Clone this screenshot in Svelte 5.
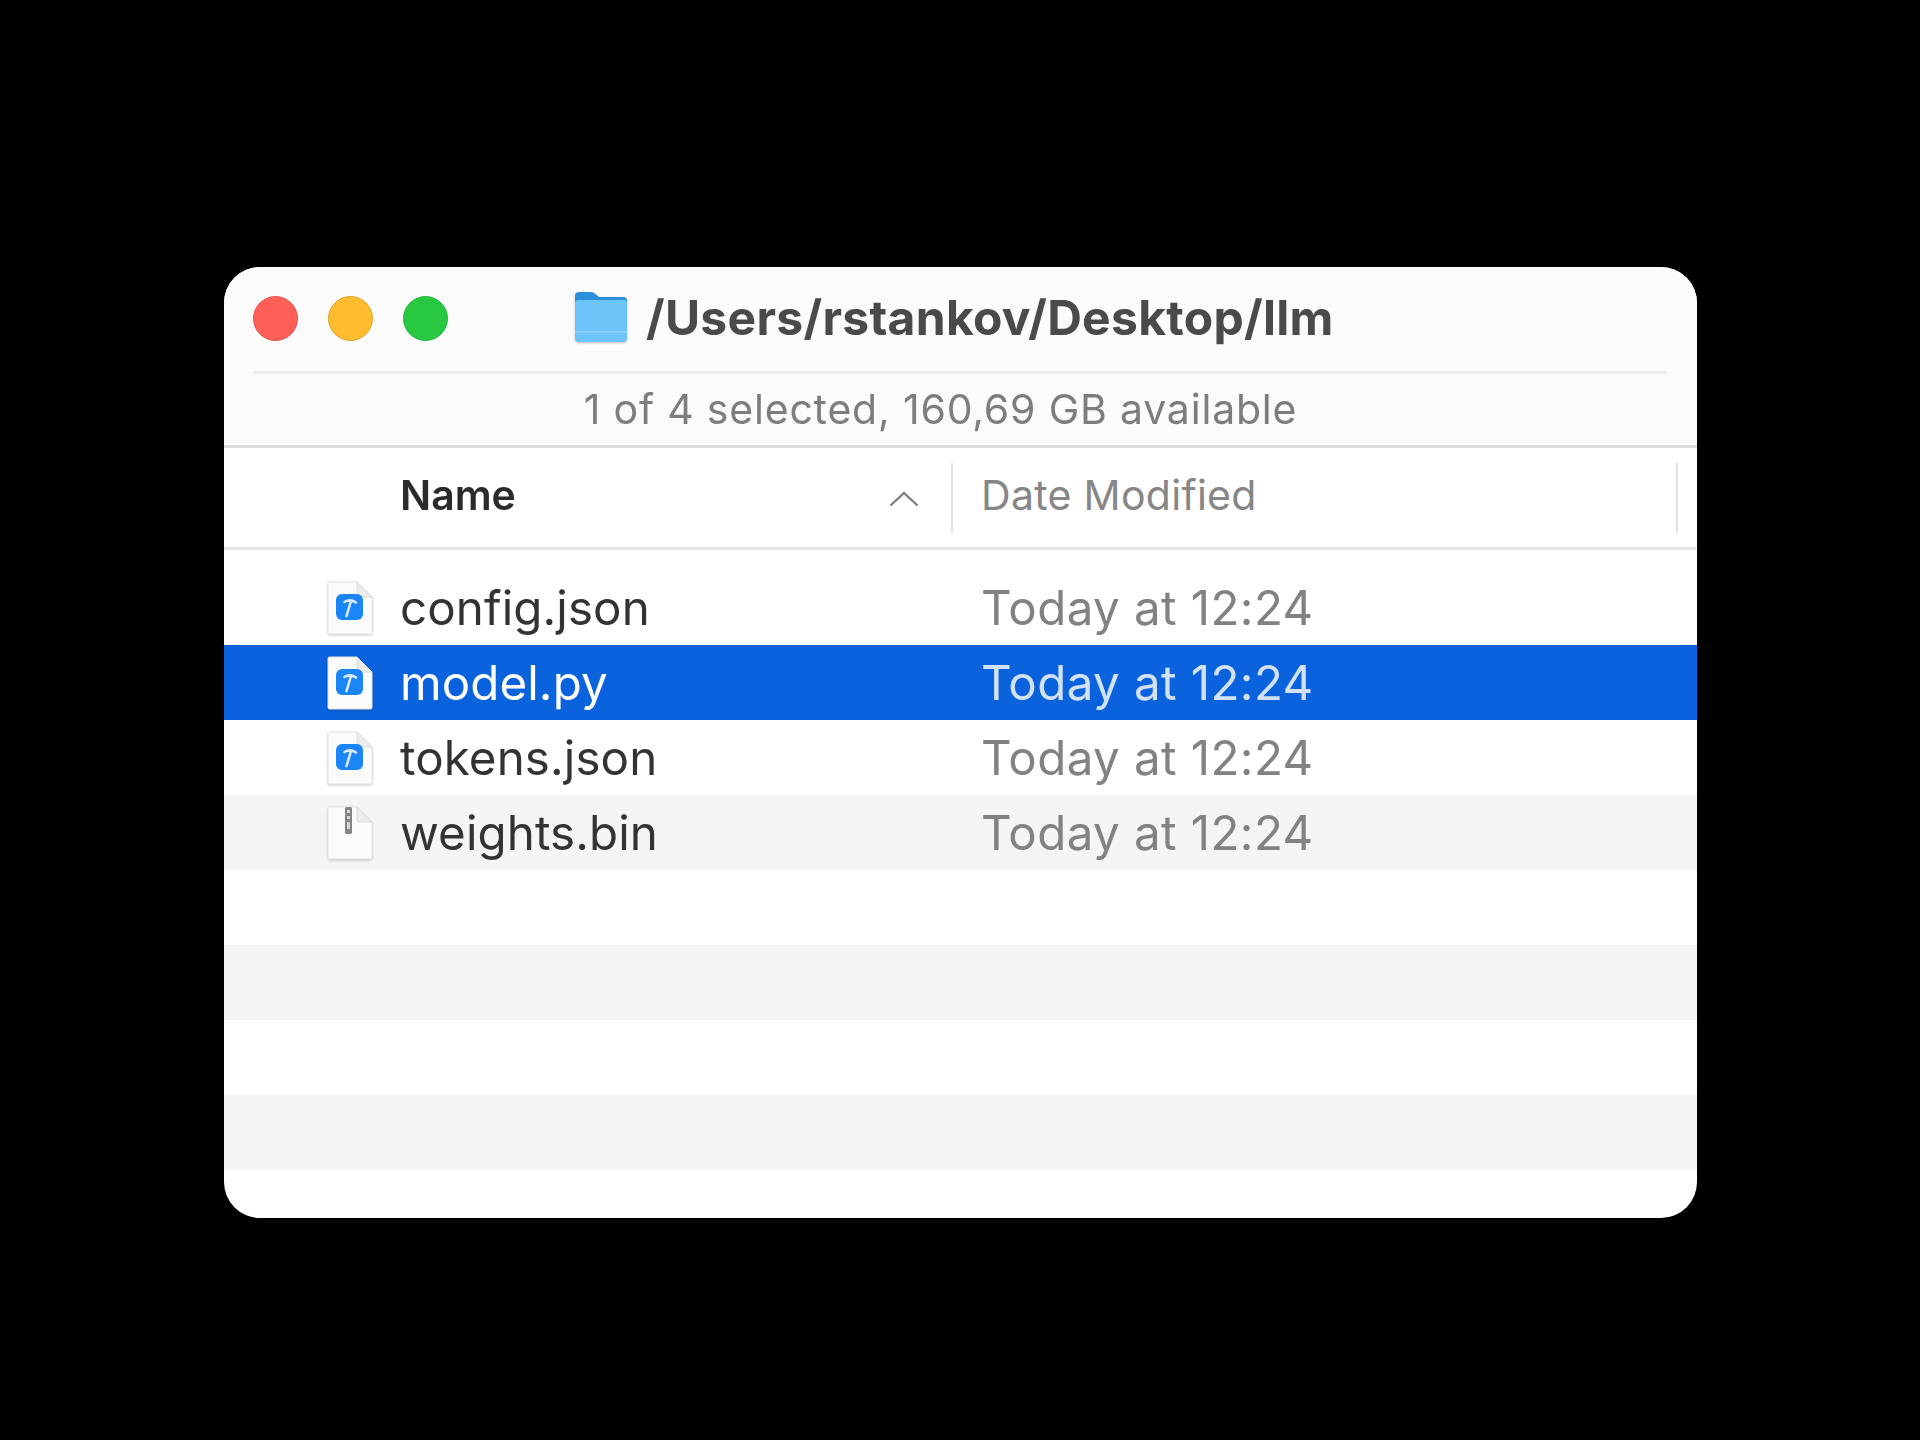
<script lang="ts">
  const files = [
    { name: 'config.json', kind: 'exec' },
    { name: 'model.py', kind: 'exec', selected: true },
    { name: 'tokens.json', kind: 'exec' },
    { name: 'weights.bin', kind: 'zip', striped: true }
  ];
  const emptyRows = [false, true, false, true];
</script>

{#snippet fileIcon(kind: string)}
  <svg class="file-icon" width="46" height="54" viewBox="0 0 46 54">
    <path d="M1 2.500Q1 1 2.500 1H30L45 16V51.500Q45 53 43.500 53H2.500Q1 53 1 51.500Z" fill="#fbfbfb" stroke="#e4e4e4" stroke-width="1" />
    <path d="M30 1V14Q30 16 32 16H45Z" fill="#ebebeb" stroke="#dcdcdc" stroke-width="1" />
    {#if kind === 'exec'}
      <rect x="9" y="13" width="27" height="26" rx="6" fill="#1a85f5" />
      <path d="M19.500 35L24 20M17.500 21Q23 17.500 29 21.500" fill="none" stroke="#dbeafd" stroke-width="2.600" stroke-linecap="round" />
    {:else}
      <rect x="18" y="1" width="7" height="27" rx="1.500" fill="#858585" />
      <rect x="20" y="4" width="3" height="3" fill="#d6d6d6" />
      <rect x="20" y="10" width="3" height="3" fill="#d6d6d6" />
      <rect x="20" y="16" width="3" height="7" fill="#d6d6d6" />
    {/if}
  </svg>
{/snippet}

<div class="page">
  <div class="window">
    <div class="titlebar">
      <div class="title-row">
        <div class="lights">
          <span class="light red"></span>
          <span class="light yellow"></span>
          <span class="light green"></span>
        </div>
        <div class="title">
          <svg class="folder" width="54" height="52" viewBox="0 0 54 52">
            <path d="M1 5Q1 1 5 1H17Q20 1 22 3.500L25 6H49Q53 6 53 10V20H1Z" fill="#2a90dc" />
            <path d="M1 12Q1 9 4 9H50Q53 9 53 12V47Q53 51 49 51H5Q1 51 1 47Z" fill="#6cc4f8" />
            <rect x="1" y="40" width="52" height="1.500" fill="#8ed2fa" />
          </svg>
          <span>/Users/rstankov/Desktop/llm</span>
        </div>
      </div>
      <div class="subtitle">1 of 4 selected, 160,69 GB available</div>
    </div>

    <div class="columns">
      <div class="col-name">
        <span>Name</span>
        <svg class="chevron" width="30" height="16" viewBox="0 0 30 16">
          <path d="M1.500 14.500L15 2L28.500 14.500" fill="none" stroke="#7a7a7a" stroke-width="2.200" />
        </svg>
      </div>
      <div class="col-date">Date Modified</div>
    </div>

    <div class="list">
      {#each files as file}
        <div class="row" class:selected={file.selected} class:striped={file.striped}>
          <div class="cell-name">
            {@render fileIcon(file.kind)}
            <span>{file.name}</span>
          </div>
          <div class="cell-date">Today at 12:24</div>
        </div>
      {/each}
      {#each emptyRows as striped}
        <div class="row" class:striped></div>
      {/each}
    </div>
  </div>
</div>

<style>
  :global(body) {
    margin: 0;
    background: #000;
  }

  .page {
    height: 1440px;
    padding: 267px 0 0 224px;
    box-sizing: border-box;
    font-family: Inter, "Liberation Sans", sans-serif;
  }

  .window {
    width: 1473px;
    height: 951px;
    background: #fff;
    border-radius: 36px;
    overflow: hidden;
  }

  .titlebar {
    height: 181px;
    box-sizing: border-box;
    background: #fafbfa;
    border-bottom: 3px solid #dedfdf;
  }

  .title-row {
    height: 107px;
    margin: 0 30px 0 29px;
    padding-bottom: 4px;
    box-sizing: border-box;
    display: flex;
    align-items: center;
    border-bottom: 3px solid #eceeed;
  }

  .lights {
    display: flex;
    gap: 30px;
    margin-top: 2px;
  }

  .light {
    width: 45px;
    height: 45px;
    border-radius: 50%;
    box-sizing: border-box;
  }

  .red { background: #fe5f57; border: 1px solid #e2544e; }
  .yellow { background: #febc2e; border: 1px solid #dea32a; }
  .green { background: #28c840; border: 1px solid #2ab640; }

  .title {
    display: flex;
    align-items: center;
    gap: 18px;
    margin-left: 126px;
    font-size: 48px;
    font-weight: 650;
    letter-spacing: 0.3px;
    color: #4a4a4a;
    filter: blur(0.6px);
  }

  .folder {
    filter: drop-shadow(0 1px 1px rgba(0, 0, 0, 0.25));
  }

  .subtitle {
    height: 71px;
    line-height: 71px;
    text-align: center;
    padding-right: 40px;
    font-size: 41px;
    letter-spacing: 0.8px;
    color: #7d7d7d;
    filter: blur(0.6px);
  }

  .columns {
    height: 102px;
    box-sizing: border-box;
    display: flex;
    align-items: center;
    border-bottom: 3px solid #e6e6e6;
    font-size: 41px;
  }

  .col-name {
    width: 729px;
    height: 70px;
    box-sizing: border-box;
    padding: 0 32px 0 176px;
    display: flex;
    align-items: center;
    justify-content: space-between;
    border-right: 2px solid #e2e2e2;
    font-weight: 600;
    color: #2b2b2b;
  }

  .col-name span {
    margin-top: -6px;
    filter: blur(0.5px);
  }

  .chevron {
    margin-top: 2px;
  }

  .col-date {
    width: 725px;
    height: 70px;
    box-sizing: border-box;
    padding: 0 0 6px 28px;
    display: flex;
    align-items: center;
    border-right: 2px solid #e2e2e2;
    letter-spacing: 0.3px;
    color: #868686;
  }

  .list {
    padding-top: 20px;
  }

  .row {
    height: 75px;
    display: flex;
    align-items: center;
    font-size: 47.500px;
  }

  .row.striped {
    background: #f4f5f5;
  }

  .row.selected {
    background: #0a62dc;
  }

  .cell-name {
    width: 757px;
    box-sizing: border-box;
    padding-left: 103px;
    display: flex;
    align-items: center;
    gap: 27px;
    color: #333;
  }

  .cell-name span {
    letter-spacing: 0.1px;
    filter: blur(0.5px);
  }

  .cell-date {
    letter-spacing: 0.4px;
    filter: blur(0.5px);
  }

  .file-icon {
    filter: drop-shadow(0 1px 1px rgba(0, 0, 0, 0.2)) blur(0.5px);
  }

  .cell-date {
    color: #828282;
  }

  .selected .cell-name {
    color: #fff;
  }

  .selected .cell-date {
    color: #d3e1f7;
  }
</style>
